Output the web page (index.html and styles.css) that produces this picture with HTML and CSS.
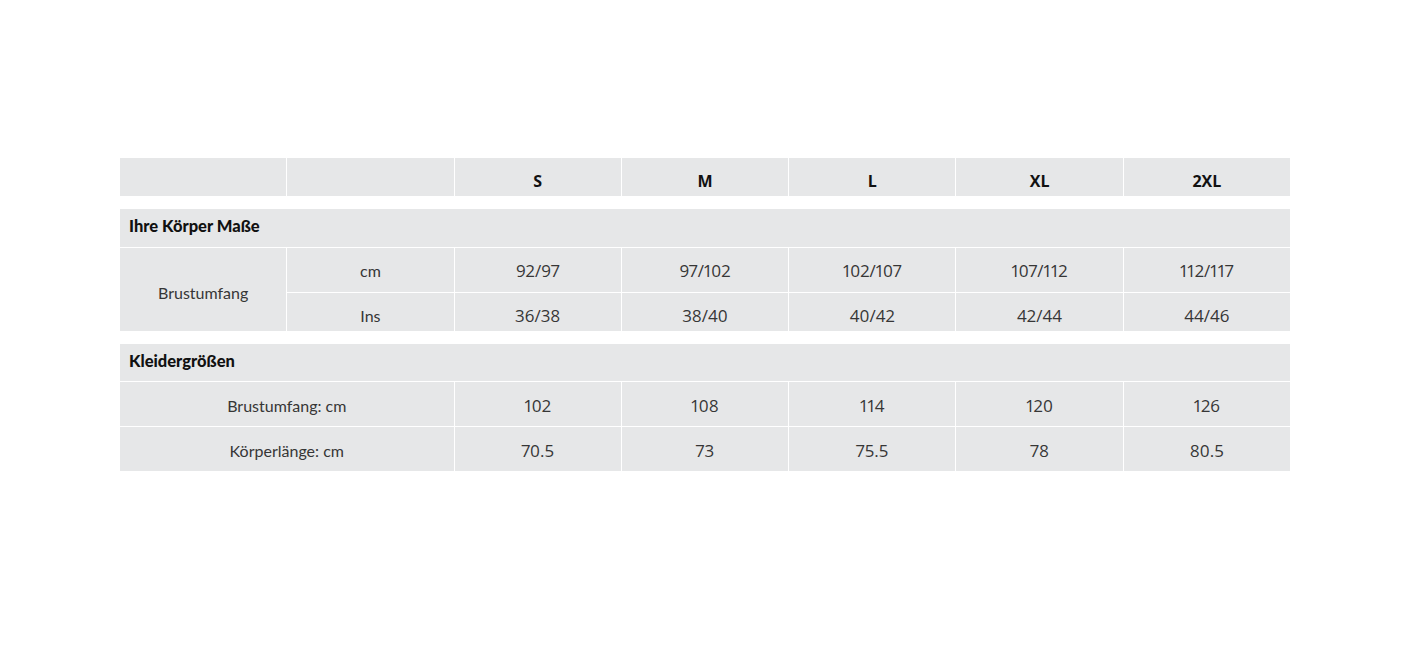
FILE: index.html
```html
<!DOCTYPE html>
<html lang="de">
<head>
<meta charset="utf-8">
<title>Größentabelle</title>
<link rel="stylesheet" href="styles.css">
</head>
<body>
<div class="sizes">
  <div class="grid head">
    <div class="c"></div>
    <div class="c"></div>
    <div class="c hd">S</div>
    <div class="c hd">M</div>
    <div class="c hd">L</div>
    <div class="c hd">XL</div>
    <div class="c hd">2XL</div>
  </div>

  <div class="grid body1">
    <div class="c title t1">Ihre Körper Maße</div>
    <div class="c lbl span2r">Brustumfang</div>
    <div class="c lbl r1">cm</div>
    <div class="c num r1">92/97</div>
    <div class="c num r1">97/102</div>
    <div class="c num r1">102/107</div>
    <div class="c num r1">107/112</div>
    <div class="c num r1">112/117</div>
    <div class="c lbl r2">Ins</div>
    <div class="c num r2">36/38</div>
    <div class="c num r2">38/40</div>
    <div class="c num r2">40/42</div>
    <div class="c num r2">42/44</div>
    <div class="c num r2">44/46</div>
  </div>

  <div class="grid body2">
    <div class="c title t2">Kleidergrößen</div>
    <div class="c lbl wide">Brustumfang: cm</div>
    <div class="c num">102</div>
    <div class="c num">108</div>
    <div class="c num">114</div>
    <div class="c num">120</div>
    <div class="c num">126</div>
    <div class="c lbl wide">Körperlänge: cm</div>
    <div class="c num">70.5</div>
    <div class="c num">73</div>
    <div class="c num">75.5</div>
    <div class="c num">78</div>
    <div class="c num">80.5</div>
  </div>
</div>
</body>
</html>
```
FILE: styles.css
```css
html, body {
  margin: 0;
  padding: 0;
  background: #ffffff;
}

body {
  padding-left: 2px;
}

.sizes {
  width: 1170px;
  margin: 158px auto 0;
  display: flex;
  flex-direction: column;
  gap: 13px;
}

.grid {
  display: grid;
  grid-template-columns: repeat(7, 1fr);
  column-gap: 1px;
  row-gap: 1px;
}

.c {
  background: #e6e7e8;
  display: flex;
  align-items: center;
  justify-content: center;
  box-sizing: border-box;
  font-family: "Open Sans", "Liberation Sans", sans-serif;
  font-size: 16px;
  color: #363636;
}

.num {
  font-size: 17px;
  font-variant-numeric: proportional-nums;
}

.head .c {
  height: 38px;
}

.hd {
  font-weight: 700;
  color: #111;
  padding-top: 8px;
}

.title {
  grid-column: 1 / span 7;
  justify-content: flex-start;
  padding-left: 9px;
  font-family: Lato, "Liberation Sans", sans-serif;
  font-weight: 900;
  font-size: 16.5px;
  color: #111;
}

.t1 {
  height: 38px;
  padding-bottom: 4px;
}

.t2 {
  height: 37px;
  padding-bottom: 3px;
}

.lbl {
  font-family: Lato, "Liberation Sans", sans-serif;
  font-size: 16px;
  color: #363636;
}

.span2r {
  grid-row: 2 / span 2;
  grid-column: 1;
  padding-top: 6px;
}

.r1 {
  height: 44px;
  padding-top: 1px;
}

.r2 {
  height: 38px;
  padding-top: 7px;
}

.wide {
  grid-column: span 2;
}

.body2 .lbl,
.body2 .num {
  height: 44px;
  padding-top: 2px;
}
```
